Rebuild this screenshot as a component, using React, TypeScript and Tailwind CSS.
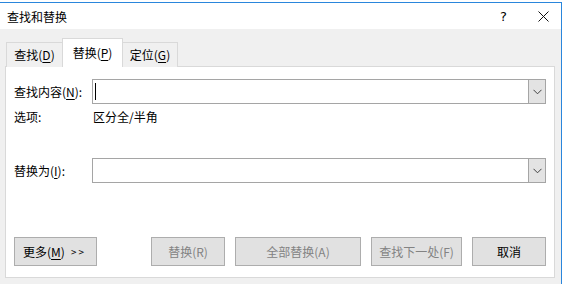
import React from 'react';

const FONT = '"Noto Sans CJK SC", "Noto Sans", sans-serif';

function Key({ k }: { k: string }) {
  return <span className="underline underline-offset-[2px] decoration-[1px]">{k}</span>;
}

function Chevron() {
  return (
    <svg width="9" height="6" viewBox="0 0 9 6" fill="none">
      <polyline points="0.5,0.8 4.5,4.8 8.5,0.8" stroke="#404040" strokeWidth="1" />
    </svg>
  );
}

function Combo({ cursor }: { cursor?: boolean }) {
  return (
    <div className="flex h-[25px] w-[454px] border border-[#a5a5a5] bg-white">
      <div className="relative flex-1">
        {cursor && <div className="absolute left-[2px] top-[3px] h-[17px] w-[1px] bg-black" />}
      </div>
      <div className="flex w-[17px] items-center justify-center border-l border-[#a5a5a5] bg-[#e3e3e3] pt-[1px]">
        <Chevron />
      </div>
    </div>
  );
}

function Btn({ w, disabled, children }: { w: string; disabled?: boolean; children: React.ReactNode }) {
  return (
    <div
      className={`flex h-[29px] ${w} items-center justify-center border border-[#adadad] bg-[#e1e1e1] text-[12px] leading-none ${
        disabled ? 'text-[#838383]' : 'text-black'
      }`}
    >
      {children}
    </div>
  );
}

export default function App() {
  return (
    <div className="h-[284px] w-[564px] overflow-hidden bg-white pt-[2px] pr-[2px]" style={{ fontFamily: FONT }}>
      <div className="flex h-[282px] flex-col border-t border-r border-[#2a86dc]">
        {/* title bar */}
        <div className="flex h-[26px] items-center bg-white pl-[7px] text-[12px] leading-none text-black">
          <span className="pt-[1px]">查找和替换</span>
          <span className="ml-auto mr-[31px] text-[13px]" style={{ fontFamily: '"DejaVu Sans", sans-serif' }}>?</span>
          <svg width="11" height="11" viewBox="0 0 11 11" className="mr-[12px]">
            <line x1="0.5" y1="0.5" x2="10.5" y2="10.5" stroke="#111" strokeWidth="1" />
            <line x1="10.5" y1="0.5" x2="0.5" y2="10.5" stroke="#111" strokeWidth="1" />
          </svg>
        </div>

        {/* body */}
        <div className="flex flex-1 flex-col bg-[#f0f0f0] pl-[5px] pr-[6px] pt-[9px]">
          {/* tabs */}
          <div className="relative z-10 flex items-end text-[12px] leading-none text-black">
            <div className="ml-[1px] flex h-[25px] w-[57px] items-center justify-center border border-b-0 border-[#d9d9d9] bg-[#f0f0f0]">
              <span>查找(<Key k="D" />)</span>
            </div>
            <div className="-ml-[1px] flex h-[29px] w-[61px] items-center justify-center border border-b-0 border-[#d9d9d9] bg-white pb-[1px]">
              <span>替换(<Key k="P" />)</span>
            </div>
            <div className="-ml-[1px] flex h-[25px] w-[56px] items-center justify-center border border-b-0 border-[#d9d9d9] bg-[#f0f0f0]">
              <span>定位(<Key k="G" />)</span>
            </div>
          </div>

          {/* panel */}
          <div className="-mt-[1px] flex h-[212px] flex-col border border-[#d9d9d9] bg-white pl-[8px] pt-[12px] text-[12px] leading-none text-black">
            <div className="flex items-center">
              <div className="w-[78px]">
                查找内容(<Key k="N" />):
              </div>
              <Combo cursor />
            </div>

            <div className="mt-[4px] flex h-[18px] items-center">
              <div className="w-[79px]">选项:</div>
              <div>区分全/半角</div>
            </div>

            <div className="mt-[32px] flex items-center">
              <div className="w-[78px]">
                替换为(<Key k="I" />):
              </div>
              <Combo />
            </div>

            <div className="mt-[54px] flex items-center">
              <Btn w="w-[83px]">
                <span className="flex w-full items-center pl-[8px]">
                  更多(<Key k="M" />)
                  <span className="ml-[6px] text-[10px] tracking-[2px]">&gt;&gt;</span>
                </span>
              </Btn>
              <div className="ml-[54px]">
                <Btn w="w-[74px]" disabled>替换(R)</Btn>
              </div>
              <div className="ml-[10px]">
                <Btn w="w-[126px]" disabled>全部替换(A)</Btn>
              </div>
              <div className="ml-[10px]">
                <Btn w="w-[91px]" disabled>查找下一处(F)</Btn>
              </div>
              <div className="ml-[10px]">
                <Btn w="w-[74px]">取消</Btn>
              </div>
            </div>
          </div>
        </div>
      </div>
    </div>
  );
}
